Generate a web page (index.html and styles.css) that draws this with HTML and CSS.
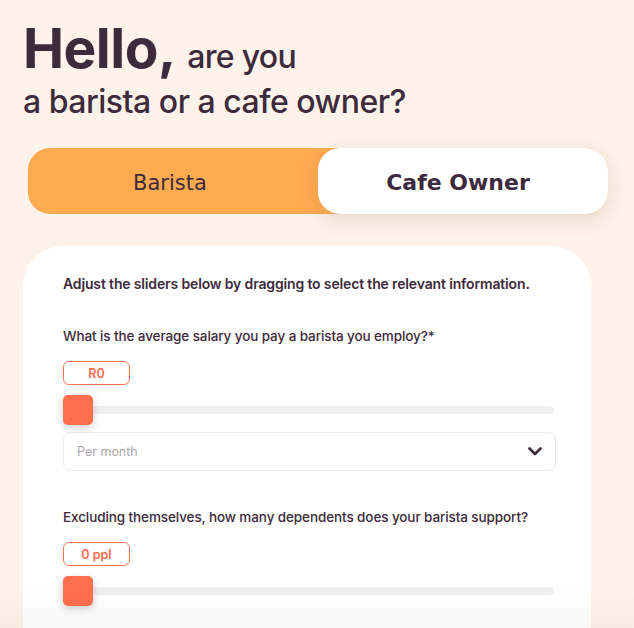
FILE: index.html
```html
<!DOCTYPE html>
<html>
<head>
<meta charset="utf-8">
<link rel="stylesheet" href="styles.css">
</head>
<body>
<div class="page">
  <h1 class="title">
    <div class="line1"><span class="hello">Hello,</span> <span class="sub">are you</span></div>
    <div class="line2">a barista or a cafe owner?</div>
  </h1>
  <div class="toggle">
    <div class="opt opt-barista">Barista</div>
    <div class="opt opt-owner">Cafe Owner</div>
  </div>
  <div class="card">
    <p class="intro">Adjust the sliders below by dragging to select the relevant information.</p>
    <div class="field">
      <p class="question">What is the average salary you pay a barista you employ?*</p>
      <div class="badge">R0</div>
      <div class="slider"><div class="track"></div><div class="thumb"></div></div>
      <div class="select"><span>Per month</span>
        <svg class="chev" width="14" height="9" viewBox="0 0 14 9"><path d="M1.5 1.5 L7 7 L12.5 1.5" fill="none" stroke="#3c2a3b" stroke-width="2.6" stroke-linecap="round" stroke-linejoin="round"/></svg>
      </div>
    </div>
    <div class="field field2">
      <p class="question">Excluding themselves, how many dependents does your barista support?</p>
      <div class="badge">0 ppl</div>
      <div class="slider"><div class="track"></div><div class="thumb"></div></div>
    </div>
  </div>
</div>
<div class="fade"></div>
</body>
</html>
```
FILE: styles.css
```css
html, body {
  margin: 0;
  padding: 0;
  background: #fdf3ea;
  height: 100%;
  overflow: hidden;
}
.page {
  font-family: Inter, "Noto Sans", sans-serif;
  color: #3d2a3c;
  padding: 0 0 0 23px;
}
.title {
  margin: 0;
  padding-top: 19px;
  font-size: 32px;
  font-weight: 500;
}
.line1 {
  line-height: 58px;
  white-space: nowrap;
}
.hello {
  font-size: 55px;
  font-weight: 700;
  letter-spacing: -0.5px;
}
.sub {
  font-size: 32px;
  font-weight: 500;
  letter-spacing: -0.7px;
  margin-left: 3px;
}
.line2 {
  font-size: 32px;
  font-weight: 500;
  letter-spacing: -0.5px;
  line-height: 40px;
  margin-top: -4px;
}
.toggle {
  margin-top: 26px;
  margin-left: 5px;
  width: 580px;
  height: 66px;
  background: #ffab50;
  border-radius: 22px;
  display: grid;
  grid-template-columns: 1fr 1fr;
}
.opt {
  display: flex;
  align-items: center;
  justify-content: center;
  font-family: "DejaVu Sans", sans-serif;
  font-size: 22px;
  color: #3d2a3c;
  padding-top: 3px;
}
.opt-barista {
  font-size: 21px;
  padding-right: 6px;
}
.opt-owner {
  background: #fff;
  border-radius: 22px;
  font-weight: 700;
  padding-right: 10px;
  box-shadow: 0 6px 20px rgba(150, 110, 80, 0.22);
}
.card {
  margin-top: 32px;
  width: 568px;
  height: 382px;
  background: #fff;
  border-radius: 40px 40px 0 0;
  box-sizing: border-box;
  padding: 29px 34px 0 40px;
}
.intro {
  margin: 0;
  font-size: 14px;
  font-weight: 600;
  line-height: 18px;
  letter-spacing: -0.15px;
}
.field {
  margin-top: 34px;
}
.field2 {
  margin-top: 37px;
}
.question {
  margin: 0;
  font-size: 13.5px;
  font-weight: 500;
  line-height: 18px;
  letter-spacing: -0.1px;
}
.badge {
  margin-top: 16px;
  width: 67px;
  height: 24px;
  box-sizing: border-box;
  border: 1px solid #ff7452;
  border-radius: 6px;
  color: #ff6c4c;
  font-size: 12.5px;
  font-weight: 600;
  display: flex;
  align-items: center;
  justify-content: center;
}
.slider {
  position: relative;
  margin-top: 10px;
  height: 30px;
  width: 491px;
  display: flex;
  align-items: center;
}
.track {
  width: 100%;
  height: 8px;
  background: #f0efee;
  border-radius: 4px;
}
.thumb {
  position: absolute;
  left: 0;
  top: 0;
  width: 30px;
  height: 30px;
  background: #ff6f4e;
  border-radius: 5px;
  box-shadow: 0 3px 8px rgba(0, 0, 0, 0.18);
}
.select {
  margin-top: 7px;
  width: 493px;
  height: 39px;
  box-sizing: border-box;
  border: 1px solid #ececec;
  border-radius: 8px;
  display: flex;
  align-items: center;
  justify-content: space-between;
  padding: 0 13px 0 13px;
  font-size: 12.5px;
  color: #aaa6a9;
}
.chev {
  display: block;
}
.fade {
  position: fixed;
  left: 0;
  right: 0;
  bottom: 0;
  height: 40px;
  background: linear-gradient(rgba(0,0,0,0), rgba(60,40,20,0.035));
  pointer-events: none;
}
```
